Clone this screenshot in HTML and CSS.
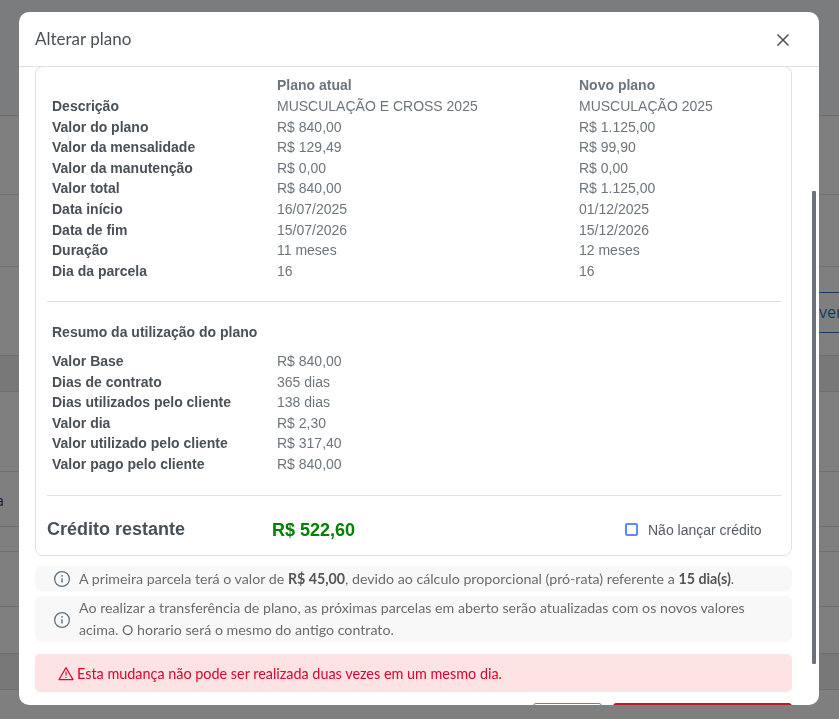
FILE: index.html
```html
<!DOCTYPE html>
<html lang="pt-BR">
<head>
<meta charset="utf-8">
<title>Alterar plano</title>
<link rel="stylesheet" href="styles.css">
</head>
<body>
<div class="page">
  <div class="bg-row h116 head"></div>
  <div class="bg-row h79"></div>
  <div class="bg-row h72"></div>
  <div class="bg-row h89"><span class="bg-link">ver</span></div>
  <div class="bg-row h36 dark"></div>
  <div class="bg-row h80"></div>
  <div class="bg-row h55"><span class="bg-a">a</span></div>
  <div class="bg-row h25"></div>
  <div class="bg-row h55"></div>
  <div class="bg-row h47"></div>
  <div class="bg-row h36 dark"></div>
</div>
<div class="overlay"></div>
<div class="modal">
  <header class="modal-header">
    <h2 class="modal-title">Alterar plano</h2>
    <svg class="close" width="14" height="14" viewBox="0 0 14 14"><path d="M1.5 1.5l11 11M12.5 1.5l-11 11" stroke="#4a4f55" stroke-width="1.5" fill="none"/></svg>
  </header>
  <div class="modal-body">
    <section class="card">
      <div class="grid top">
        <span></span><b class="col-head">Plano atual</b><b class="col-head">Novo plano</b>
        <b>Descrição</b><span>MUSCULAÇÃO E CROSS 2025</span><span>MUSCULAÇÃO 2025</span>
        <b>Valor do plano</b><span>R$ 840,00</span><span>R$ 1.125,00</span>
        <b>Valor da mensalidade</b><span>R$ 129,49</span><span>R$ 99,90</span>
        <b>Valor da manutenção</b><span>R$ 0,00</span><span>R$ 0,00</span>
        <b>Valor total</b><span>R$ 840,00</span><span>R$ 1.125,00</span>
        <b>Data início</b><span>16/07/2025</span><span>01/12/2025</span>
        <b>Data de fim</b><span>15/07/2026</span><span>15/12/2026</span>
        <b>Duração</b><span>11 meses</span><span>12 meses</span>
        <b>Dia da parcela</b><span>16</span><span>16</span>
      </div>
      <hr class="divider first">
      <h3 class="resume-title">Resumo da utilização do plano</h3>
      <div class="grid">
        <b>Valor Base</b><span>R$ 840,00</span><span></span>
        <b>Dias de contrato</b><span>365 dias</span><span></span>
        <b>Dias utilizados pelo cliente</b><span>138 dias</span><span></span>
        <b>Valor dia</b><span>R$ 2,30</span><span></span>
        <b>Valor utilizado pelo cliente</b><span>R$ 317,40</span><span></span>
        <b>Valor pago pelo cliente</b><span>R$ 840,00</span><span></span>
      </div>
      <hr class="divider second">
      <div class="credit">
        <strong class="credit-label">Crédito restante</strong>
        <strong class="credit-value">R$ 522,60</strong>
        <label class="check"><span class="box"></span>Não lançar crédito</label>
      </div>
    </section>
    <div class="info one">
      <svg class="i" width="18" height="18" viewBox="0 0 18 18"><circle cx="9" cy="9" r="7.4" fill="none" stroke="#5a7286" stroke-width="1.3"/><path d="M9 8.2v4.2" stroke="#5a7286" stroke-width="1.4"/><circle cx="9" cy="5.8" r=".9" fill="#5a7286"/></svg>
      <p>A primeira parcela terá o valor de <b>R$ 45,00</b>, devido ao cálculo proporcional (pró-rata) referente a <b>15 dia(s)</b>.</p>
    </div>
    <div class="info two">
      <svg class="i" width="18" height="18" viewBox="0 0 18 18"><circle cx="9" cy="9" r="7.4" fill="none" stroke="#5a7286" stroke-width="1.3"/><path d="M9 8.2v4.2" stroke="#5a7286" stroke-width="1.4"/><circle cx="9" cy="5.8" r=".9" fill="#5a7286"/></svg>
      <p>Ao realizar a transferência de plano, as próximas parcelas em aberto serão atualizadas com os novos valores acima. O horario será o mesmo do antigo contrato.</p>
    </div>
    <div class="alert">
      <svg width="16" height="15" viewBox="0 0 16 15"><path d="M8 1.6L15 13.6H1z" fill="none" stroke="#e4002b" stroke-width="1.1" stroke-linejoin="round"/><path d="M8 5.6v4" stroke="#e4002b" stroke-width="1.1"/><circle cx="8" cy="11.4" r=".65" fill="#e4002b"/></svg>
      <span>Esta mudança não pode ser realizada duas vezes em um mesmo dia.</span>
    </div>
    <div class="actions">
      <button class="btn outline">Voltar</button>
      <button class="btn danger">Confirmar alteração</button>
    </div>
  </div>
  <div class="scrollbar"></div>
</div>
</body>
</html>
```
FILE: styles.css
```css
* { box-sizing: border-box; }
html, body { margin: 0; height: 100%; overflow: hidden; }
body { background: #fff; font-family: "Liberation Sans", Arial, sans-serif; }
.page { height: 719px; overflow: hidden; }
.bg-row { border-bottom: 1px solid #dcdcdc; position: relative; }
.head { background: #f6f8fa; }
.dark { background: #f0f1f2; }
.h116 { height: 116px; }
.h79 { height: 79px; }
.h72 { height: 72px; }
.h89 { height: 89px; }
.h36 { height: 36px; }
.h80 { height: 80px; }
.h55 { height: 55px; }
.h25 { height: 25px; }
.h47 { height: 47px; }
.bg-link {
  position: absolute; right: 0; top: 25px; width: 20px; height: 41px;
  border-top: 1px solid #2a78c8; border-bottom: 1px solid #2a78c8;
  color: #2a78c8; font: 16px/38px "Open Sans", sans-serif; white-space: nowrap;
}
.bg-a { position: absolute; left: -4px; top: 19px; font: 14px "Open Sans", sans-serif; color: #333; }
.overlay { position: fixed; inset: 0; background: rgba(0, 0, 0, .5); }
.modal {
  position: fixed; left: 19px; top: 12px; width: 800px; height: 693px;
  background: #fff; border-radius: 10px; overflow: hidden;
  display: flex; flex-direction: column;
}
.modal-header {
  flex: none; height: 55px; padding: 0 29px 0 16px;
  border-bottom: 1px solid #dee2e6;
  display: flex; align-items: center; justify-content: space-between;
}
.modal-title { margin: -2px 0 0; font: 400 17px Lato, sans-serif; color: #495057; }
.close { margin-top: 2px; }
.modal-body { flex: 1; min-height: 0; overflow: hidden; padding: 0 27px 0 16px; }
.card {
  height: 490px; border: 1px solid #dee2e6; border-radius: 8px;
  padding: 8px 10px 0 11px; margin-top: -1px;
}
.grid {
  display: grid; grid-template-columns: 225px 302px 1fr; padding-left: 5px;
  font-size: 14px; line-height: 20.6px; color: #6c757d;
}
.grid.top { padding-top: .4px; }
.grid b { color: #495057; }
.grid .col-head { color: #6c757d; }
.divider { border: 0; border-top: 1px solid #dee2e6; margin: 0; }
.divider.first { margin-top: 20px; }
.divider.second { margin-top: 20.3px; }
.resume-title { margin: 20px 0 8.7px 5px; font-size: 14px; line-height: 20px; color: #495057; }
.credit { display: flex; align-items: center; height: 70px; }
.credit-label { width: 225px; margin-top: -2px; font-size: 18px; color: #495057; }
.credit-value { width: 353px; font-size: 18px; color: #008000; }
.check { display: flex; align-items: center; gap: 10px; font-size: 14px; color: #555b66; margin-top: -2px; }
.box { width: 13px; height: 13px; border: 2px solid #5b8def; border-radius: 2px; }
.info {
  background: #f8f8f8; border-radius: 6px; display: flex; align-items: center;
  font: 14.23px/22px Lato, sans-serif; color: #6c6c6c;
}
.info p { margin: 0; }
.info b { color: #555; }
.info .i { flex: none; }
.info.one { height: 25px; margin-top: 10px; padding-left: 18px; gap: 8px; }
.info.two { height: 46px; margin-top: 5px; padding: 0 30px 0 18px; gap: 8px; }
.info.two .i { margin-top: 1px; }
.alert {
  height: 38px; margin-top: 12px; padding-left: 23px; background: #fde3e3; border-radius: 5px;
  display: flex; align-items: center; gap: 3px; color: #e4002b;
  font: 14.4px Lato, sans-serif;
}
.actions { display: flex; justify-content: flex-end; gap: 11px; margin-top: 11px; }
.btn { height: 38px; border-radius: 3px; font: 14px Lato, sans-serif; }
.btn.outline { width: 69px; background: #fff; border: 1px solid #2196f3; color: #2196f3; }
.btn.danger { width: 179px; background: #b71c2c; border: 1px solid #b71c2c; color: #fff; }
.scrollbar {
  position: absolute; left: 793px; top: 179px; width: 4px; height: 473px;
  background: #6c727a; border-radius: 1px;
}
```
